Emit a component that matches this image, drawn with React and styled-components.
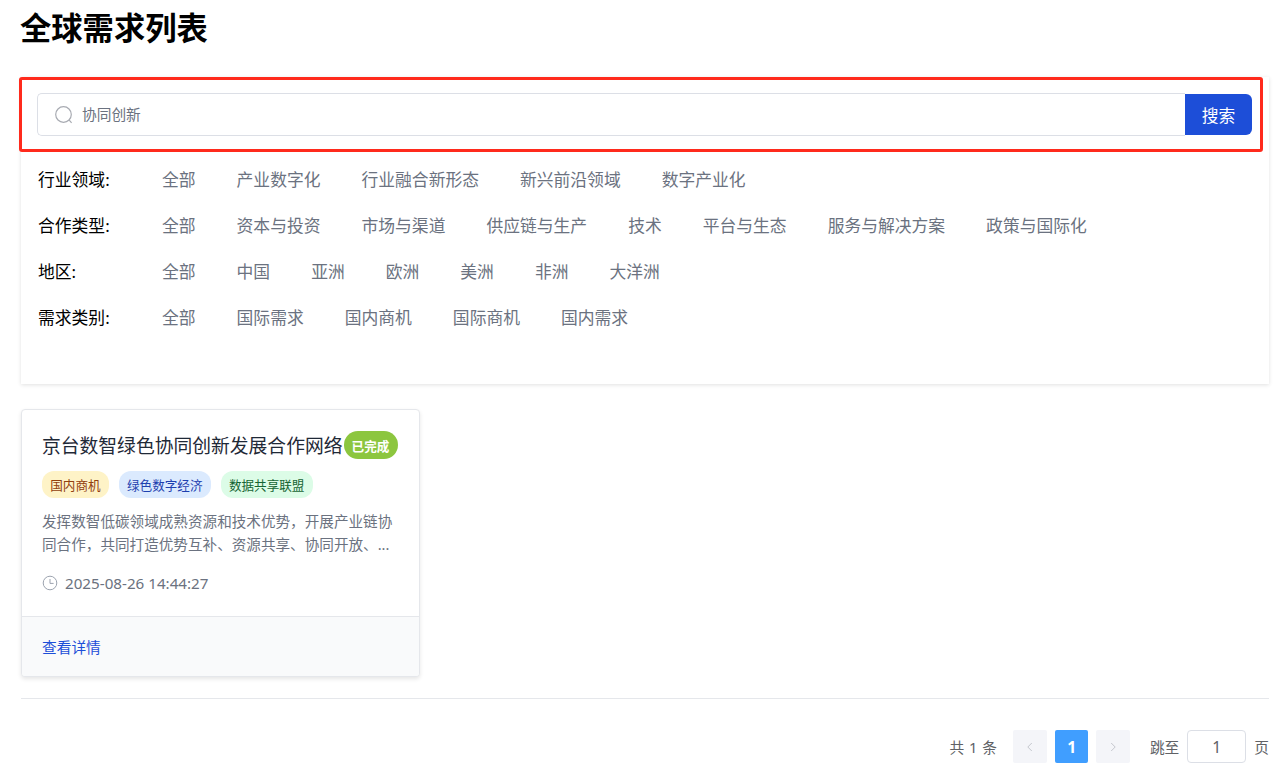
import React from "react"
import styled, { createGlobalStyle } from "styled-components"

const filters = [
  { label: "行业领域:", options: ["全部", "产业数字化", "行业融合新形态", "新兴前沿领域", "数字产业化"] },
  { label: "合作类型:", options: ["全部", "资本与投资", "市场与渠道", "供应链与生产", "技术", "平台与生态", "服务与解决方案", "政策与国际化"] },
  { label: "地区:", options: ["全部", "中国", "亚洲", "欧洲", "美洲", "非洲", "大洋洲"] },
  { label: "需求类别:", options: ["全部", "国际需求", "国内商机", "国际商机", "国内需求"] },
]

const tags = [
  { text: "国内商机", bg: "#fef3c7", color: "#92400e" },
  { text: "绿色数字经济", bg: "#dbeafe", color: "#1e40af" },
  { text: "数据共享联盟", bg: "#dcfce7", color: "#166534" },
]

function SearchIcon() {
  return (
    <svg width="20" height="20" viewBox="0 0 20 20" fill="none" stroke="#a8abb2" strokeWidth="1.2">
      <circle cx="9.5" cy="9.5" r="7.8" />
      <path d="M15.2 15.2 L17.6 17.8" />
    </svg>
  )
}

function ClockIcon() {
  return (
    <svg width="16" height="16" viewBox="0 0 16 16" fill="none" stroke="#9ca3af" strokeWidth="1">
      <circle cx="8" cy="8" r="6.8" />
      <path d="M8 4 V8.4 H11.6" />
    </svg>
  )
}

function App() {
  return (
    <Page>
      <GlobalStyle />
      <Title>全球需求列表</Title>
      <FilterPanel>
        <Highlight />
        <SearchRow>
          <SearchBox>
            <SearchIcon />
            <SearchText>协同创新</SearchText>
          </SearchBox>
          <SearchButton>搜索</SearchButton>
        </SearchRow>
        {filters.map((f) => (
          <FilterRow key={f.label}>
            <FilterLabel>{f.label}</FilterLabel>
            <Options>
              {f.options.map((o) => (
                <Option key={o}>{o}</Option>
              ))}
            </Options>
          </FilterRow>
        ))}
      </FilterPanel>

      <Card>
        <CardBody>
          <CardHead>
            <CardTitle>京台数智绿色协同创新发展合作网络</CardTitle>
            <Status>已完成</Status>
          </CardHead>
          <Tags>
            {tags.map((t) => (
              <Tag key={t.text} $bg={t.bg} $color={t.color}>{t.text}</Tag>
            ))}
          </Tags>
          <Desc>发挥数智低碳领域成熟资源和技术优势，开展产业链协同合作，共同打造优势互补、资源共享、协同开放、...</Desc>
          <DateRow>
            <ClockIcon />
            <span>2025-08-26 14:44:27</span>
          </DateRow>
        </CardBody>
        <CardFoot>
          <DetailLink>查看详情</DetailLink>
        </CardFoot>
      </Card>

      <Divider />

      <Pagination>
        <Total>共 1 条</Total>
        <PageButton>
          <svg width="10" height="10" viewBox="0 0 10 10" fill="none" stroke="#c4c7ce" strokeWidth="1"><path d="M6.8 1 L2.8 5 L6.8 9" /></svg>
        </PageButton>
        <PageButton $active>1</PageButton>
        <PageButton>
          <svg width="10" height="10" viewBox="0 0 10 10" fill="none" stroke="#c4c7ce" strokeWidth="1"><path d="M3.2 1 L7.2 5 L3.2 9" /></svg>
        </PageButton>
        <JumpLabel>跳至</JumpLabel>
        <JumpInput>1</JumpInput>
        <PageUnit>页</PageUnit>
      </Pagination>
    </Page>
  )
}

export default App

const GlobalStyle = createGlobalStyle`
  html, body {
    margin: 0;
    padding: 0;
    background: #fff;
    font-family: "Noto Sans", "Noto Sans CJK SC", sans-serif;
  }
`

const Page = styled.div`
  box-sizing: border-box;
  width: 1284px;
  height: 779px;
  overflow: hidden;
  padding: 0 15px 0 21px;
`

const Title = styled.h1`
  margin: 0 0 0 -1px;
  height: 77px;
  padding-top: 7px;
  box-sizing: border-box;
  font-size: 31.3px;
  line-height: 42px;
  font-weight: 700;
  color: #000;
`

const FilterPanel = styled.div`
  position: relative;
  box-sizing: border-box;
  height: 307px;
  padding: 16px 17px 0 16px;
  background: #fff;
  box-shadow: 0 1px 4px rgba(0, 0, 0, 0.12);
`

const Highlight = styled.div`
  position: absolute;
  left: -2px;
  top: 0;
  width: 1244px;
  height: 75px;
  box-sizing: border-box;
  border: 3px solid #ff2a1c;
  border-radius: 3px;
  pointer-events: none;
`

const SearchRow = styled.div`
  display: flex;
  align-items: center;
  height: 43px;
  margin-bottom: 20px;
`

const SearchBox = styled.div`
  flex: 1;
  height: 43px;
  box-sizing: border-box;
  display: flex;
  align-items: center;
  gap: 8px;
  padding-left: 16px;
  border: 1px solid #dcdfe6;
  border-right: none;
  border-radius: 5px 0 0 5px;
`

const SearchText = styled.span`
  font-size: 14.7px;
  line-height: 20px;
  padding-bottom: 2px;
  color: #6b7280;
`

const SearchButton = styled.button`
  width: 67px;
  height: 41px;
  padding: 0;
  border: none;
  border-radius: 0 6px 6px 0;
  background: #1d4ed8;
  color: #fff;
  font-size: 16.8px;
  font-family: inherit;
`

const FilterRow = styled.div`
  display: flex;
  align-items: center;
  height: 46px;
  padding-left: 1px;
`

const FilterLabel = styled.div`
  width: 124px;
  font-size: 16.8px;
  color: #000;
`

const Options = styled.div`
  display: flex;
  gap: 41px;
`

const Option = styled.span`
  font-size: 16.8px;
  color: #6b7280;
`

const Card = styled.div`
  box-sizing: border-box;
  width: 399px;
  height: 268px;
  margin-top: 25px;
  border: 1px solid #e5e7eb;
  border-radius: 4px;
  background: #fff;
  box-shadow: 0 2px 4px rgba(0, 0, 0, 0.1);
  display: flex;
  flex-direction: column;
  overflow: hidden;
`

const CardBody = styled.div`
  box-sizing: border-box;
  height: 206px;
  padding: 21px 20px 0 20px;
`

const CardHead = styled.div`
  display: flex;
  align-items: center;
  gap: 1px;
  height: 28px;
`

const CardTitle = styled.div`
  font-size: 18.8px;
  color: #1f2937;
  white-space: nowrap;
`

const Status = styled.span`
  display: flex;
  align-items: center;
  justify-content: center;
  width: 54px;
  height: 28px;
  border-radius: 14px;
  background: #8cc63f;
  color: #fff;
  font-size: 12.6px;
  font-weight: 700;
`

const Tags = styled.div`
  display: flex;
  gap: 10px;
  margin-top: 12px;
`

const Tag = styled.span`
  display: flex;
  align-items: center;
  height: 27px;
  padding: 0 8.2px;
  border-radius: 12px;
  font-size: 12.6px;
  background: ${(p) => p.$bg};
  color: ${(p) => p.$color};
`

const Desc = styled.p`
  margin: 11.5px 0 0;
  height: 46px;
  font-size: 14.6px;
  line-height: 23px;
  color: #6b7280;
`

const DateRow = styled.div`
  display: flex;
  align-items: center;
  gap: 7px;
  margin-top: 17.5px;
  font-size: 15.2px;
  color: #6b7280;
`

const CardFoot = styled.div`
  flex: 1;
  display: flex;
  align-items: center;
  padding-left: 20px;
  border-top: 1px solid #e5e7eb;
  background: #f9fafb;
`

const DetailLink = styled.a`
  font-size: 14.7px;
  color: #1d4ed8;
`

const Divider = styled.div`
  height: 1px;
  margin-top: 21px;
  background: #e5e7eb;
`

const Pagination = styled.div`
  display: flex;
  align-items: center;
  justify-content: flex-end;
  height: 33px;
  margin-top: 31px;
  font-size: 14.7px;
  color: #606266;
`

const Total = styled.span`
  margin-right: 16px;
  letter-spacing: 0.5px;
`

const PageButton = styled.div`
  box-sizing: border-box;
  width: 33.5px;
  height: 33px;
  margin-right: 8px;
  display: flex;
  align-items: center;
  justify-content: center;
  border-radius: 2px;
  font-size: 15.7px;
  font-weight: 700;
  background: ${(p) => (p.$active ? "#409eff" : "#f4f5f9")};
  color: ${(p) => (p.$active ? "#fff" : "#c0c4cc")};
`

const JumpLabel = styled.span`
  margin-left: 12px;
  margin-right: 8px;
`

const JumpInput = styled.div`
  box-sizing: border-box;
  width: 59px;
  height: 33px;
  display: flex;
  align-items: center;
  justify-content: center;
  border: 1px solid #dcdfe6;
  border-radius: 4px;
  font-size: 15.7px;
`

const PageUnit = styled.span`
  margin-left: 8px;
`
